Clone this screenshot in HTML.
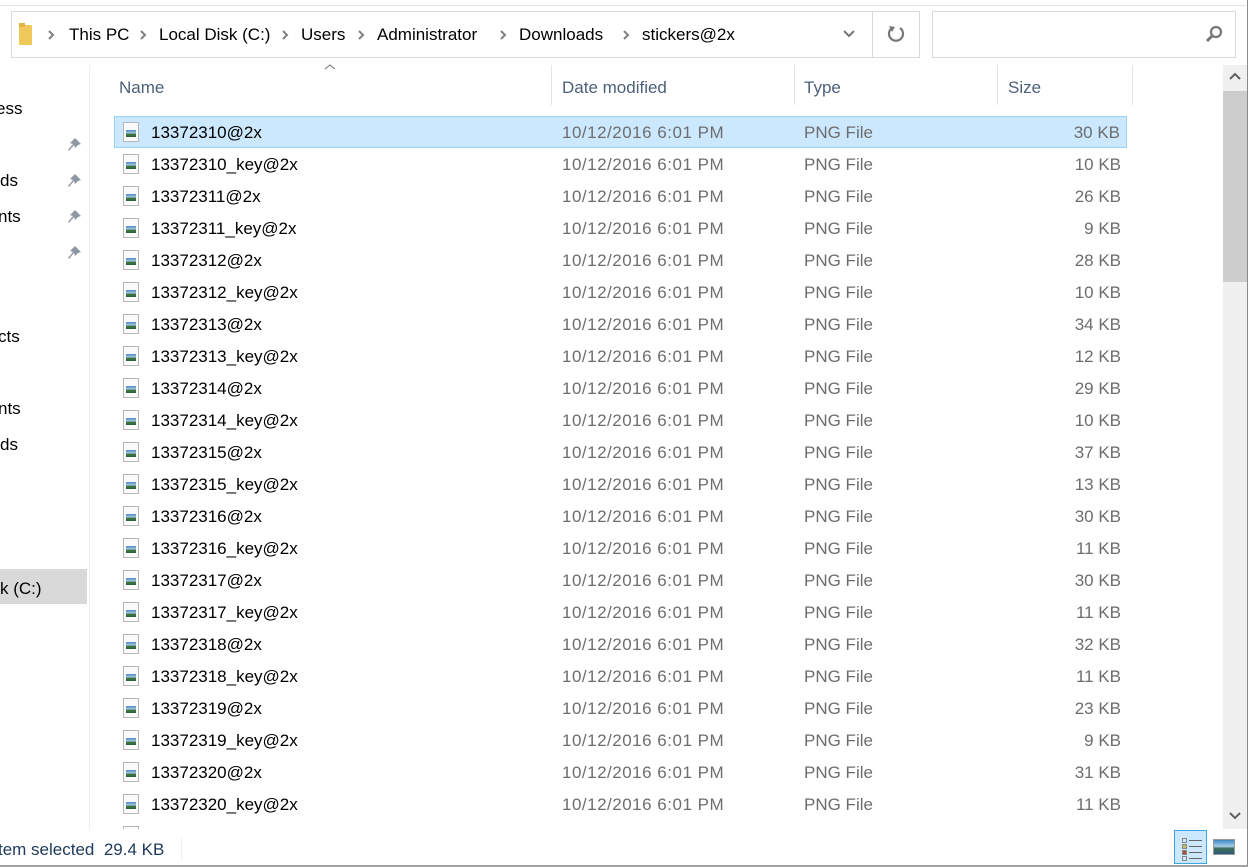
<!DOCTYPE html>
<html><head><meta charset="utf-8">
<style>
*{margin:0;padding:0;box-sizing:border-box}
body{width:1250px;height:867px;overflow:hidden;background:#fff;font-family:"Liberation Sans",sans-serif;position:relative;color:#000}
.a{position:absolute}
.t{font-size:17px;white-space:nowrap;line-height:20px}
.row{position:absolute;left:114px;width:1013px;height:32px}
.row.sel{background:#cce8ff;border:1px solid #99d1ff}
.ic{position:absolute;left:9px;top:6px;width:16px;height:20px;border:1px solid #b5b5b5;background:#fafafa}
.ic:after{content:"";position:absolute;left:2px;top:7px;width:10px;height:7px;background:linear-gradient(#4a86c5 0,#a9cbe6 45%,#3f7a46 55%,#2f5e35 100%)}
.n{position:absolute;left:37px;top:7px;color:#000}
.d{position:absolute;left:448px;top:7px;color:#6d6d6d;letter-spacing:.5px}
.ty{position:absolute;left:690px;top:7px;color:#6d6d6d}
.s{position:absolute;right:6px;top:7px;color:#6d6d6d}
.hd{position:absolute;top:78px;font-size:17px;color:#4c607a}
.dv{position:absolute;top:65px;width:1px;height:40px;background:#e5e5e5}
.nav{position:absolute;font-size:17px;color:#000;left:0}
.pin{position:absolute;left:66px}
.crumb{position:absolute;top:25px;font-size:17px;color:#000}
.chev{position:absolute;top:29px}
</style></head><body>
<div class="a" style="left:0;top:5px;width:1246px;height:1px;background:#e3e3e3"></div>
<div class="a" style="left:1247px;top:0;width:1px;height:867px;background:#8a8a8a"></div>
<div class="a" style="left:11px;top:11px;width:909px;height:47px;border:1px solid #d9d9d9"></div>
<div class="a" style="left:872px;top:11px;width:1px;height:47px;background:#d9d9d9"></div>
<div class="a" style="left:19px;top:25px;width:13px;height:20px;background:#f0c85a;border-radius:1px"></div>
<div class="a" style="left:19px;top:23px;width:6px;height:4px;background:#e4b23e"></div>
<svg class="chev" style="left:47px" width="8" height="12"><path d="M2 2 L6 6 L2 10" stroke="#808080" stroke-width="2" fill="none"/></svg>
<span class="crumb" style="left:69px">This PC</span>
<svg class="chev" style="left:139px" width="8" height="12"><path d="M2 2 L6 6 L2 10" stroke="#808080" stroke-width="2" fill="none"/></svg>
<span class="crumb" style="left:159px">Local Disk (C:)</span>
<svg class="chev" style="left:281px" width="8" height="12"><path d="M2 2 L6 6 L2 10" stroke="#808080" stroke-width="2" fill="none"/></svg>
<span class="crumb" style="left:301px">Users</span>
<svg class="chev" style="left:357px" width="8" height="12"><path d="M2 2 L6 6 L2 10" stroke="#808080" stroke-width="2" fill="none"/></svg>
<span class="crumb" style="left:377px">Administrator</span>
<svg class="chev" style="left:499px" width="8" height="12"><path d="M2 2 L6 6 L2 10" stroke="#808080" stroke-width="2" fill="none"/></svg>
<span class="crumb" style="left:519px">Downloads</span>
<svg class="chev" style="left:622px" width="8" height="12"><path d="M2 2 L6 6 L2 10" stroke="#808080" stroke-width="2" fill="none"/></svg>
<span class="crumb" style="left:642px">stickers@2x</span>
<svg class="a" style="left:842px;top:29px" width="14" height="10"><path d="M2 2 L7 7 L12 2" stroke="#777" stroke-width="2" fill="none"/></svg>
<svg class="a" style="left:886px;top:24px" width="20" height="20"><path d="M14 4 A7 7 0 1 1 6 4" stroke="#777" stroke-width="2.2" fill="none"/><path d="M3 2 L9 3 L6 8Z" fill="#777"/></svg>
<div class="a" style="left:932px;top:11px;width:304px;height:47px;border:1px solid #d9d9d9"></div>
<svg class="a" style="left:1204px;top:24px" width="20" height="20"><circle cx="12" cy="8" r="5" stroke="#777" stroke-width="2.2" fill="none"/><path d="M8 12 L3 17" stroke="#777" stroke-width="3"/></svg>
<div class="a" style="left:89px;top:65px;width:1px;height:765px;background:#f0f0f0"></div>
<span class="nav" style="left:-4px;top:99px">ess</span>
<span class="nav" style="left:0;top:171px">ds</span>
<span class="nav" style="left:-2px;top:207px">nts</span>
<span class="nav" style="left:-2px;top:327px">cts</span>
<span class="nav" style="left:-2px;top:399px">nts</span>
<span class="nav" style="left:0;top:435px">ds</span>
<svg class="pin" style="top:135px" width="18" height="18"><path d="M9 3 L15 9 L12 10 L9 13 L8 10 L3 16 L2 15 L7 9 L4 8 L7 5 Z" fill="#8e98a2"/></svg>
<svg class="pin" style="top:171px" width="18" height="18"><path d="M9 3 L15 9 L12 10 L9 13 L8 10 L3 16 L2 15 L7 9 L4 8 L7 5 Z" fill="#8e98a2"/></svg>
<svg class="pin" style="top:207px" width="18" height="18"><path d="M9 3 L15 9 L12 10 L9 13 L8 10 L3 16 L2 15 L7 9 L4 8 L7 5 Z" fill="#8e98a2"/></svg>
<svg class="pin" style="top:243px" width="18" height="18"><path d="M9 3 L15 9 L12 10 L9 13 L8 10 L3 16 L2 15 L7 9 L4 8 L7 5 Z" fill="#8e98a2"/></svg>
<div class="a" style="left:0;top:569px;width:87px;height:35px;background:#d9d9d9"></div>
<span class="nav" style="left:0;top:579px">k (C:)</span>
<svg class="a" style="left:323px;top:63px" width="14" height="8"><path d="M2 6 L7 2 L12 6" stroke="#888" stroke-width="1.2" fill="none"/></svg>
<span class="hd" style="left:119px">Name</span>
<div class="dv" style="left:551px"></div>
<span class="hd" style="left:562px">Date modified</span>
<div class="dv" style="left:794px"></div>
<span class="hd" style="left:804px">Type</span>
<div class="dv" style="left:997px"></div>
<span class="hd" style="left:1008px">Size</span>
<div class="dv" style="left:1132px"></div>
<div class="a" style="left:0;top:0;width:1222px;height:829px;overflow:hidden">
<div class="row sel" style="top:116px"><div class="ic" style="left:8px;top:5px"></div><span class="n t" style="left:36px;top:6px">13372310@2x</span><span class="d t" style="left:447px;top:6px">10/12/2016 6:01 PM</span><span class="ty t" style="left:689px;top:6px">PNG File</span><span class="s t" style="top:6px">30 KB</span></div>
<div class="row" style="top:148px"><div class="ic"></div><span class="n t">13372310_key@2x</span><span class="d t">10/12/2016 6:01 PM</span><span class="ty t">PNG File</span><span class="s t">10 KB</span></div>
<div class="row" style="top:180px"><div class="ic"></div><span class="n t">13372311@2x</span><span class="d t">10/12/2016 6:01 PM</span><span class="ty t">PNG File</span><span class="s t">26 KB</span></div>
<div class="row" style="top:212px"><div class="ic"></div><span class="n t">13372311_key@2x</span><span class="d t">10/12/2016 6:01 PM</span><span class="ty t">PNG File</span><span class="s t">9 KB</span></div>
<div class="row" style="top:244px"><div class="ic"></div><span class="n t">13372312@2x</span><span class="d t">10/12/2016 6:01 PM</span><span class="ty t">PNG File</span><span class="s t">28 KB</span></div>
<div class="row" style="top:276px"><div class="ic"></div><span class="n t">13372312_key@2x</span><span class="d t">10/12/2016 6:01 PM</span><span class="ty t">PNG File</span><span class="s t">10 KB</span></div>
<div class="row" style="top:308px"><div class="ic"></div><span class="n t">13372313@2x</span><span class="d t">10/12/2016 6:01 PM</span><span class="ty t">PNG File</span><span class="s t">34 KB</span></div>
<div class="row" style="top:340px"><div class="ic"></div><span class="n t">13372313_key@2x</span><span class="d t">10/12/2016 6:01 PM</span><span class="ty t">PNG File</span><span class="s t">12 KB</span></div>
<div class="row" style="top:372px"><div class="ic"></div><span class="n t">13372314@2x</span><span class="d t">10/12/2016 6:01 PM</span><span class="ty t">PNG File</span><span class="s t">29 KB</span></div>
<div class="row" style="top:404px"><div class="ic"></div><span class="n t">13372314_key@2x</span><span class="d t">10/12/2016 6:01 PM</span><span class="ty t">PNG File</span><span class="s t">10 KB</span></div>
<div class="row" style="top:436px"><div class="ic"></div><span class="n t">13372315@2x</span><span class="d t">10/12/2016 6:01 PM</span><span class="ty t">PNG File</span><span class="s t">37 KB</span></div>
<div class="row" style="top:468px"><div class="ic"></div><span class="n t">13372315_key@2x</span><span class="d t">10/12/2016 6:01 PM</span><span class="ty t">PNG File</span><span class="s t">13 KB</span></div>
<div class="row" style="top:500px"><div class="ic"></div><span class="n t">13372316@2x</span><span class="d t">10/12/2016 6:01 PM</span><span class="ty t">PNG File</span><span class="s t">30 KB</span></div>
<div class="row" style="top:532px"><div class="ic"></div><span class="n t">13372316_key@2x</span><span class="d t">10/12/2016 6:01 PM</span><span class="ty t">PNG File</span><span class="s t">11 KB</span></div>
<div class="row" style="top:564px"><div class="ic"></div><span class="n t">13372317@2x</span><span class="d t">10/12/2016 6:01 PM</span><span class="ty t">PNG File</span><span class="s t">30 KB</span></div>
<div class="row" style="top:596px"><div class="ic"></div><span class="n t">13372317_key@2x</span><span class="d t">10/12/2016 6:01 PM</span><span class="ty t">PNG File</span><span class="s t">11 KB</span></div>
<div class="row" style="top:628px"><div class="ic"></div><span class="n t">13372318@2x</span><span class="d t">10/12/2016 6:01 PM</span><span class="ty t">PNG File</span><span class="s t">32 KB</span></div>
<div class="row" style="top:660px"><div class="ic"></div><span class="n t">13372318_key@2x</span><span class="d t">10/12/2016 6:01 PM</span><span class="ty t">PNG File</span><span class="s t">11 KB</span></div>
<div class="row" style="top:692px"><div class="ic"></div><span class="n t">13372319@2x</span><span class="d t">10/12/2016 6:01 PM</span><span class="ty t">PNG File</span><span class="s t">23 KB</span></div>
<div class="row" style="top:724px"><div class="ic"></div><span class="n t">13372319_key@2x</span><span class="d t">10/12/2016 6:01 PM</span><span class="ty t">PNG File</span><span class="s t">9 KB</span></div>
<div class="row" style="top:756px"><div class="ic"></div><span class="n t">13372320@2x</span><span class="d t">10/12/2016 6:01 PM</span><span class="ty t">PNG File</span><span class="s t">31 KB</span></div>
<div class="row" style="top:788px"><div class="ic"></div><span class="n t">13372320_key@2x</span><span class="d t">10/12/2016 6:01 PM</span><span class="ty t">PNG File</span><span class="s t">11 KB</span></div>
<div class="row" style="top:820px"><div class="ic"></div></div>
</div>
<div class="a" style="left:1223px;top:65px;width:24px;height:764px;background:#f0f0f0"></div>
<div class="a" style="left:1223px;top:91px;width:24px;height:191px;background:#cdcdcd"></div>
<svg class="a" style="left:1228px;top:71px" width="14" height="10"><path d="M2 8 L7 3 L12 8" stroke="#606060" stroke-width="2" fill="none"/></svg>
<svg class="a" style="left:1228px;top:811px" width="14" height="10"><path d="M2 2 L7 7 L12 2" stroke="#606060" stroke-width="2" fill="none"/></svg>
<span class="a" style="left:-2px;top:840px;font-size:17px;color:#1e395b;white-space:nowrap">tem selected&nbsp; 29.4 KB</span>
<div class="a" style="left:181px;top:838px;width:1px;height:22px;background:#eee"></div>
<div class="a" style="left:1174px;top:830px;width:33px;height:34px;background:#cce8ff;border:1px solid #3ea6e6"></div>
<div class="a" style="left:1182px;top:838px;width:5px;height:5px;border:1px solid #888"></div>
<div class="a" style="left:1182px;top:844px;width:5px;height:5px;border:1px solid #888;background:#c9b96a"></div>
<div class="a" style="left:1182px;top:850px;width:5px;height:5px;border:1px solid #888;background:#b5472e"></div>
<div class="a" style="left:1182px;top:856px;width:5px;height:5px;border:1px solid #888"></div>
<div class="a" style="left:1189px;top:840px;width:13px;height:1px;background:#666"></div>
<div class="a" style="left:1189px;top:846px;width:13px;height:1px;background:#666"></div>
<div class="a" style="left:1189px;top:852px;width:13px;height:1px;background:#666"></div>
<div class="a" style="left:1189px;top:858px;width:13px;height:1px;background:#666"></div>
<div class="a" style="left:1213px;top:839px;width:22px;height:16px;border:1px solid #999;background:linear-gradient(#3d86c6,#a6cfe8 45%,#3c6f5a 60%,#2c5a78)"></div>
<div class="a" style="left:0;top:865px;width:1248px;height:2px;background:#a0a0a0"></div>
</body></html>
